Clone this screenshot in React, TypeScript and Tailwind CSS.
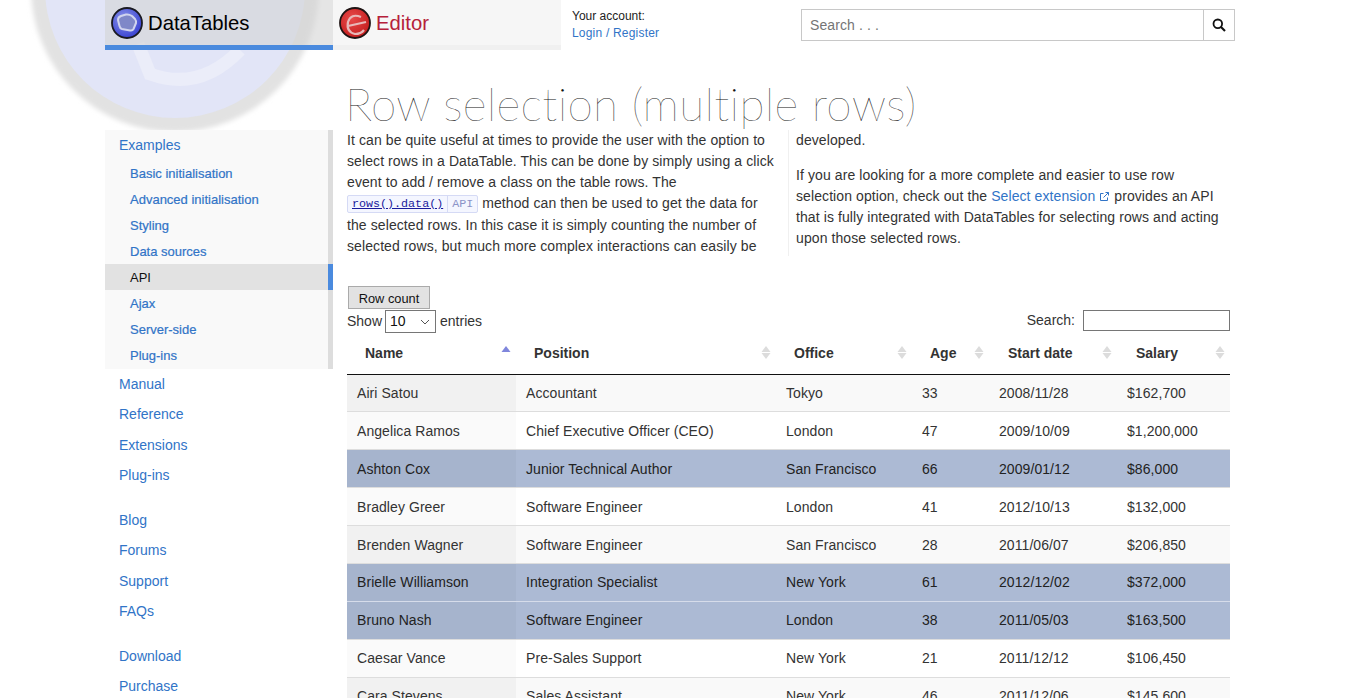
const sans = "font-['Liberation_Sans',Arial,sans-serif]";

const rows: [string, string, string, string, string, string, boolean][] = [
  ["Airi Satou", "Accountant", "Tokyo", "33", "2008/11/28", "$162,700", false],
  ["Angelica Ramos", "Chief Executive Officer (CEO)", "London", "47", "2009/10/09", "$1,200,000", false],
  ["Ashton Cox", "Junior Technical Author", "San Francisco", "66", "2009/01/12", "$86,000", true],
  ["Bradley Greer", "Software Engineer", "London", "41", "2012/10/13", "$132,000", false],
  ["Brenden Wagner", "Software Engineer", "San Francisco", "28", "2011/06/07", "$206,850", false],
  ["Brielle Williamson", "Integration Specialist", "New York", "61", "2012/12/02", "$372,000", true],
  ["Bruno Nash", "Software Engineer", "London", "38", "2011/05/03", "$163,500", true],
  ["Caesar Vance", "Pre-Sales Support", "New York", "21", "2011/12/12", "$106,450", false],
  ["Cara Stevens", "Sales Assistant", "New York", "46", "2011/12/06", "$145,600", false],
];

const headers = [
  { t: "Name", w: "w-[169px] pl-[18px]" },
  { t: "Position", w: "w-[260px] pl-[18px]" },
  { t: "Office", w: "w-[136px] pl-[18px]" },
  { t: "Age", w: "w-[77px] pl-[18px]" },
  { t: "Start date", w: "w-[128px] pl-[19px]" },
  { t: "Salary", w: "w-[113px] pl-[19px]" },
];

function Watermark() {
  return (
    <svg className="absolute left-0 top-0" width="340" height="150" viewBox="0 0 340 150">
      <defs>
        <filter id="wmblur" x="-10%" y="-10%" width="120%" height="120%">
          <feGaussianBlur stdDeviation="2.5" />
        </filter>
      </defs>
      <circle cx="175" cy="-12" r="144" fill="#e2e2e2" filter="url(#wmblur)" />
      <circle cx="175" cy="-12" r="130" fill="#e2e5f7" />
      <path d="M138 44 L150 74 Q200 92 240 50" fill="none" stroke="#ebedf9" strokeWidth="13" />
    </svg>
  );
}

function DTLogo() {
  return (
    <svg width="32" height="32" viewBox="0 0 32 32">
      <defs>
        <radialGradient id="dtg" cx="0.4" cy="0.35" r="0.75">
          <stop offset="0" stopColor="#8a94e8" />
          <stop offset="1" stopColor="#2f38d0" />
        </radialGradient>
      </defs>
      <circle cx="16" cy="16" r="15" fill="url(#dtg)" stroke="#1a1a22" strokeWidth="1.8" />
      <path d="M7 13 Q7 10 10 9 L15 7.5 Q18 7 21 9 L24 12 Q25.5 14 25 16 L22.5 22 Q21.5 24 19 23.5 L11 22 Q9 21.5 8.5 19 Z" fill="#7f88c8" stroke="#d0d4ee" strokeWidth="2" strokeLinejoin="round" />
    </svg>
  );
}

function EdLogo() {
  return (
    <svg width="32" height="32" viewBox="0 0 32 32">
      <defs>
        <radialGradient id="edg" cx="0.4" cy="0.35" r="0.75">
          <stop offset="0" stopColor="#e84a4a" />
          <stop offset="1" stopColor="#c01818" />
        </radialGradient>
      </defs>
      <circle cx="16" cy="16" r="15" fill="url(#edg)" stroke="#1f1414" strokeWidth="1.8" />
      <path d="M22 10 Q12 6 9 15 Q7 25 16 27 Q22 27 25 23" fill="none" stroke="#e8b8b8" strokeWidth="2.2" />
      <path d="M9 19 L27 15" fill="none" stroke="#e8b8b8" strokeWidth="2.2" />
    </svg>
  );
}

function SortIcon({ active }: { active?: boolean }) {
  return (
    <span className="absolute right-[5px] top-[13px] flex flex-col gap-[1px]">
      <svg width="10" height="6" viewBox="0 0 10 6"><path d="M5 0 L9.5 6 H0.5 Z" fill={active ? "#7f86dc" : "#dcdcdc"} /></svg>
      {active ? <span className="h-[6px] w-[10px]" /> : <svg width="10" height="6" viewBox="0 0 10 6"><path d="M0.5 0 H9.5 L5 6 Z" fill="#dcdcdc" /></svg>}
    </span>
  );
}

const subNav = ["Basic initialisation", "Advanced initialisation", "Styling", "Data sources", "API", "Ajax", "Server-side", "Plug-ins"];

function NavLink({ t }: { t: string }) {
  return <a className="block h-[30.4px] pl-[14px] text-[14px] leading-[30px] text-[#3174c7]">{t}</a>;
}

export default function App() {
  return (
    <div className={`relative h-[698px] w-[1349px] overflow-hidden bg-white text-[14px] text-[#333] ${sans}`}>
      <Watermark />
      <div className="relative">
        <header className="flex h-[130px] items-start pl-[105px]">
          <div className="flex h-[50px] w-[228px] items-center gap-[5px] border-b-[5px] border-[#4a8ade] bg-[#d3d3d3]/60 pl-[6px] text-[20.3px] text-black">
            <DTLogo />
            <span className="mt-[2px]">DataTables</span>
          </div>
          <div className="flex h-[50px] w-[228px] items-center gap-[5px] border-b-[5px] border-[#f0f0f0] bg-[#f6f6f6] pl-[6px] text-[20.3px] text-[#b5203a]">
            <EdLogo />
            <span className="mt-[2px]">Editor</span>
          </div>
          <div className="ml-[11px] w-[88px] whitespace-nowrap pt-[8px] text-[12px] leading-[17px] text-[#222]">
            <div>Your account:</div>
            <a className="tracking-[0.2px] text-[#3174c7]">Login / Register</a>
          </div>
          <div className="ml-[141px] mt-[9px] flex h-[32px] w-[434px] border border-[#c8c8c8] bg-white">
            <span className="flex-1 pl-[8px] text-[14px] leading-[31px] tracking-[0.1px] text-[#757575]">Search . . .</span>
            <span className="flex w-[31px] items-center justify-center border-l border-[#c8c8c8]">
              <svg width="14" height="14" viewBox="0 0 14 14" fill="none" stroke="#111" strokeWidth="1.8">
                <circle cx="5.8" cy="5.8" r="4.3" />
                <path d="M9 9 L13 13" strokeWidth="2.2" />
              </svg>
            </span>
          </div>
        </header>

        <div className="flex pl-[105px]">
          <nav className="w-[228px] shrink-0">
            <div className="h-[239px] border-r-[5px] border-[#ddd] bg-[#f9f9f9]">
              <a className="block h-[30px] pl-[14px] text-[14px] leading-[31px] text-[#3174c7]">Examples</a>
              {subNav.map((s) =>
                s === "API" ? (
                  <div key={s} className="relative -mr-[5px] h-[26px] border-r-[5px] border-[#4a8ade] bg-[#e2e2e2] pl-[25px] text-[13px] font-normal leading-[28px] text-[#111]">{s}</div>
                ) : (
                  <a key={s} className="block h-[26px] pl-[25px] text-[13px] leading-[28px] text-[#3174c7] [-webkit-text-stroke:0.2px_#3174c7]">{s}</a>
                ),
              )}
            </div>
            <div>
              {["Manual", "Reference", "Extensions", "Plug-ins"].map((t) => <NavLink key={t} t={t} />)}
              <div className="h-[14.2px]" />
              {["Blog", "Forums", "Support", "FAQs"].map((t) => <NavLink key={t} t={t} />)}
              <div className="h-[14.6px]" />
              {["Download", "Purchase"].map((t) => <NavLink key={t} t={t} />)}
            </div>
          </nav>

          <main className="ml-[14px] -mt-[57px] w-[883px]">
            <h1 className="-ml-[2px] h-[57px] whitespace-nowrap pt-[2px] font-['Lato',sans-serif] text-[46px] font-thin leading-[57px] tracking-[0.25px] text-[#111]">Row selection (multiple rows)</h1>
            <div className="flex h-[126px] text-[14px] leading-[21px] tracking-[0.09px]">
              <div className="w-[442px] border-r border-[#f0f0f0] pr-[8px]">
                <p>
                  It can be quite useful at times to provide the user with the option to select rows in a DataTable. This can be done by simply using a click event to add / remove a class on the table rows. The{" "}
                  <span className="mb-[2px] inline-flex h-[18px] items-center rounded-[2px] border border-[#d5daf5] bg-[#f4f6ff] align-[1px] font-['Liberation_Mono',monospace] text-[11.7px] leading-[16px] tracking-normal">
                    <a className="px-[4px] text-[#1a1a9c] underline">rows().data()</a>
                    <span className="border-l border-[#d5daf5] px-[4px] text-[#8c94c8]">API</span>
                  </span>{" "}
                  method can then be used to get the data for the selected rows. In this case it is simply counting the number of selected rows, but much more complex interactions can easily be
                </p>
              </div>
              <div className="w-[435px] pl-[7px]">
                <p className="mb-[14px]">developed.</p>
                <p>
                  If you are looking for a more complete and easier to use row selection option, check out the <a className="text-[#3174c7]">Select extension</a>{" "}
                  <svg className="inline-block align-[-1px]" width="11" height="11" viewBox="0 0 11 11" fill="none" stroke="#3174c7" strokeWidth="1">
                    <path d="M8.5 6.5 V9.5 H1.5 V2.5 H4.5" />
                    <path d="M4.5 6.5 L9.5 1.5 M6.5 1.5 H9.5 V4.5" />
                  </svg>{" "}
                  provides an API that is fully integrated with DataTables for selecting rows and acting upon those selected rows.
                </p>
              </div>
            </div>

            <button className="ml-[1px] mt-[30px] block h-[23px] w-[82px] border border-[#aaa] bg-[#e2e2e2] text-center text-[12.8px] leading-[23px] text-[#111]">Row count</button>
            <div className="flex h-[24px] items-end justify-between">
              <div className="flex items-center">
                <span>Show</span>
                <span className="mx-[3px] flex h-[23px] w-[51px] items-center justify-between border border-[#767676] bg-white pl-[4px] pr-[5px] text-[14px] text-[#111]">
                  10
                  <svg width="10" height="6" viewBox="0 0 10 6" fill="none" stroke="#555" strokeWidth="1"><path d="M1 1 L5 5 L9 1" /></svg>
                </span>
                <span className="ml-[1px]">entries</span>
              </div>
              <div className="flex items-center pb-[2px]">
                <span>Search:</span>
                <span className="ml-[8px] h-[21px] w-[147px] border border-[#767676] bg-white" />
              </div>
            </div>

            <table className="w-[883px] table-fixed border-collapse">
              <thead>
                <tr className="h-[41px] border-b border-[#111]">
                  {headers.map((h, i) => (
                    <th key={h.t} className={`relative ${h.w} pt-[1px] text-left align-middle text-[14px] font-bold text-[#333]`}>
                      {h.t}
                      <SortIcon active={i === 0} />
                    </th>
                  ))}
                </tr>
              </thead>
              <tbody>
                {rows.map((r, i) => {
                  const odd = i % 2 === 0;
                  const rowBg = r[6] ? "bg-[#acbad4]" : odd ? "bg-[#f9f9f9]" : "bg-white";
                  const sortBg = r[6] ? "bg-[#a6b4cd]" : odd ? "bg-[#f1f1f1]" : "bg-[#fafafa]";
                  return (
                    <tr key={r[0]} className={`h-[37.9px] border-t ${i === 0 ? "border-transparent" : r[6] && rows[i - 1][6] ? "border-[#d6dcea]" : "border-[#ddd]"} ${rowBg}`}>
                      {r.slice(0, 6).map((c, j) => (
                        <td key={j} className={`pl-[10px] align-middle text-[14px] leading-[20px] tracking-[0.07px] ${r[6] ? "text-[#222]" : "text-[#333]"} ${j === 0 ? sortBg : ""}`}>{c as string}</td>
                      ))}
                    </tr>
                  );
                })}
              </tbody>
            </table>
          </main>
        </div>
      </div>
    </div>
  );
}
